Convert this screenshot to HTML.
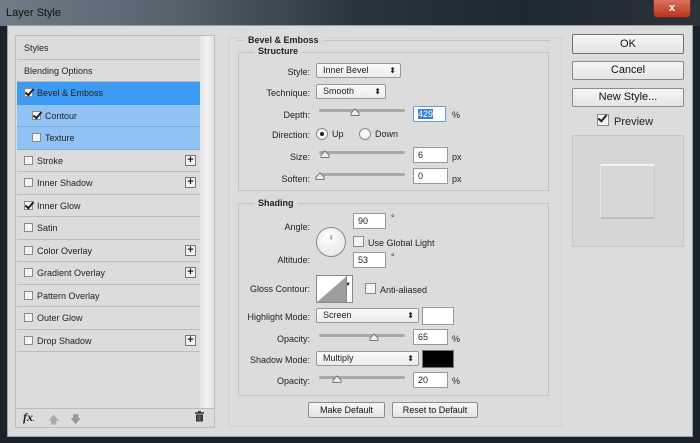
<!DOCTYPE html>
<html><head><meta charset="utf-8">
<style>
*{margin:0;padding:0;box-sizing:border-box}
body{width:700px;height:443px;overflow:hidden;background:#1a222b;font-family:"Liberation Sans",sans-serif;font-size:9px;color:#222;position:relative}
.a{position:absolute}
#title{left:0;top:0;width:700px;height:26px;background:linear-gradient(90deg,#6f7b86 0%,#55616c 25%,#2a3540 50%,#1d2731 75%,#2a333c 100%)}
#body{left:7px;top:25px;width:686px;height:412px;background:#dcdcdc;border:1px solid #9aa0a6}
.row{position:absolute;left:17px;width:183px;height:22.5px;border-bottom:1px solid #bdbdbd;line-height:22px;padding-left:7px}
.cb{display:inline-block;width:9px;height:9px;border:1px solid #8a8a8a;background:#f4f4f4;vertical-align:-1px;margin-right:4px;position:relative}
.cb.on::after{content:"";position:absolute;left:2px;top:-2px;width:3px;height:7px;border:solid #222;border-width:0 2px 2px 0;transform:rotate(40deg)}
.plus{position:absolute;right:4px;top:5px;width:11px;height:11px;border:1px solid #777;background:#f2f2f2;font-size:11px;line-height:9px;text-align:center;font-weight:bold}
.btn{position:absolute;border:1px solid #8c8c8c;border-radius:2px;background:linear-gradient(#f6f6f6,#e4e4e4);text-align:center;font-size:11px;color:#111}
.lbl{position:absolute;text-align:right;width:80px}
.sel{position:absolute;height:15px;border:1px solid #999;background:linear-gradient(#fafafa,#ececec);border-radius:2px;padding-left:6px;line-height:13px}
.sel::after{content:"⬍";position:absolute;right:4px;top:0;font-size:8px}
.inp{position:absolute;height:16px;border:1px solid #999;background:#fff;padding-left:4px;line-height:14px}
.trk{position:absolute;height:3px;background:#a9a9a9;border-radius:2px}
.thm{position:absolute;width:10px;height:8px}
.grp{position:absolute;border:1px solid #c4c4c4}
.gt{position:absolute;background:#dcdcdc;font-weight:bold;padding:0 4px}
.rad{display:inline-block;width:12px;height:12px;border:1px solid #888;border-radius:50%;background:#f6f6f6;vertical-align:-3px;margin-right:4px;position:relative}
</style></head><body>
<div id="title" class="a"></div>
<div class="a" style="left:6px;top:7px;color:#111;font-size:11px">Layer Style</div>
<div class="a" style="left:653px;top:0;width:38px;height:18px;background:linear-gradient(#d9735f,#b8321c);border:1px solid #6a2a20;border-top:none;border-radius:0 0 4px 4px;color:#fff;text-align:center;font-weight:bold;font-size:11px;line-height:17px">x</div>
<div id="body" class="a"></div>

<div class="a" style="left:15px;top:35px;width:200px;height:393px;border:1px solid #bdbdbd;background:#dcdcdc"></div>
<div class="a" style="left:200px;top:36px;width:14px;height:372px;background:linear-gradient(90deg,#e4e4e4,#f4f4f4,#e0e0e0)"></div>
<div class="row" style="top:37px;padding-left:7px">Styles</div>
<div class="row" style="top:59.5px">Blending Options</div>
<div class="row" style="top:82px;background:#3c9bf4;border-color:#3c9bf4"><span class="cb on"></span>Bevel &amp; Emboss</div>
<div class="row" style="top:104.5px;background:#90c3f3;padding-left:15px;border-color:#78aee0"><span class="cb on"></span>Contour</div>
<div class="row" style="top:127px;background:#90c3f3;padding-left:15px;border-color:#78aee0"><span class="cb"></span>Texture</div>
<div class="row" style="top:149.5px"><span class="cb"></span>Stroke<span class="plus">+</span></div>
<div class="row" style="top:172px"><span class="cb"></span>Inner Shadow<span class="plus">+</span></div>
<div class="row" style="top:194.5px"><span class="cb on"></span>Inner Glow</div>
<div class="row" style="top:217px"><span class="cb"></span>Satin</div>
<div class="row" style="top:239.5px"><span class="cb"></span>Color Overlay<span class="plus">+</span></div>
<div class="row" style="top:262px"><span class="cb"></span>Gradient Overlay<span class="plus">+</span></div>
<div class="row" style="top:284.5px"><span class="cb"></span>Pattern Overlay</div>
<div class="row" style="top:307px"><span class="cb"></span>Outer Glow</div>
<div class="row" style="top:329.5px"><span class="cb"></span>Drop Shadow<span class="plus">+</span></div>
<div class="a" style="left:16px;top:408px;width:198px;height:1px;background:#bdbdbd"></div>
<div class="a" style="left:23px;top:410px;font-family:'Liberation Serif',serif;font-style:italic;font-weight:bold;font-size:12px">fx<span style="font-size:6px">.</span></div>
<div class="a" style="left:48px;top:411px;color:#aaa;font-size:11px">🡅</div>
<div class="a" style="left:70px;top:411px;color:#999;font-size:11px">🡇</div>
<svg class="a" style="left:194px;top:411px" width="11" height="11" viewBox="0 0 11 11"><path d="M4 0.5H7M1 2H10" stroke="#333" stroke-width="1.5"/><path d="M2 3.5H9V10.5H2Z" fill="#333"/><path d="M4 4.5V9.5M5.5 4.5V9.5M7 4.5V9.5" stroke="#888" stroke-width="0.6"/></svg>

<div class="grp" style="left:228px;top:37px;width:334px;height:390px;border-color:#d0d0d0"></div>
<div class="grp" style="left:237px;top:40px;width:313px;height:1px;border-width:1px 0 0 0"></div>
<div class="gt" style="left:244px;top:35px">Bevel &amp; Emboss</div>
<div class="grp" style="left:238px;top:52px;width:311px;height:139px"></div>
<div class="gt" style="left:254px;top:46px">Structure</div>
<div class="lbl" style="left:230px;top:67px">Style:</div>
<div class="sel" style="left:316px;top:63px;width:85px">Inner Bevel</div>
<div class="lbl" style="left:230px;top:88px">Technique:</div>
<div class="sel" style="left:316px;top:84px;width:70px">Smooth</div>
<div class="lbl" style="left:230px;top:110px">Depth:</div>
<div class="trk" style="left:319px;top:109px;width:86px"></div>
<svg class="thm" style="left:350px;top:108px" viewBox="0 0 10 8"><path d="M1 7.5H9V5L5 1 1 5Z" fill="#eee" stroke="#777"/></svg>
<div class="inp" style="left:413px;top:106px;width:33px;border-color:#6a9cd6"><span style="background:#3a7fd6;color:#fff">429</span></div>
<div class="a" style="left:452px;top:110px">%</div>
<div class="lbl" style="left:230px;top:130px">Direction:</div>
<div class="a" style="left:316px;top:128px"><span class="rad"><span style="position:absolute;left:3px;top:3px;width:4px;height:4px;border-radius:50%;background:#222"></span></span>Up</div>
<div class="a" style="left:359px;top:128px"><span class="rad"></span>Down</div>
<div class="lbl" style="left:230px;top:152px">Size:</div>
<div class="trk" style="left:319px;top:151px;width:86px"></div>
<svg class="thm" style="left:320px;top:150px" viewBox="0 0 10 8"><path d="M1 7.5H9V5L5 1 1 5Z" fill="#eee" stroke="#777"/></svg>
<div class="inp" style="left:413px;top:147px;width:35px">6</div>
<div class="a" style="left:452px;top:152px">px</div>
<div class="lbl" style="left:230px;top:174px">Soften:</div>
<div class="trk" style="left:319px;top:173px;width:86px"></div>
<svg class="thm" style="left:315px;top:172px" viewBox="0 0 10 8"><path d="M1 7.5H9V5L5 1 1 5Z" fill="#eee" stroke="#777"/></svg>
<div class="inp" style="left:413px;top:168px;width:35px">0</div>
<div class="a" style="left:452px;top:174px">px</div>

<div class="grp" style="left:238px;top:203px;width:311px;height:193px"></div>
<div class="gt" style="left:254px;top:198px">Shading</div>
<div class="lbl" style="left:230px;top:222px">Angle:</div>
<div class="a" style="left:316px;top:227px;width:30px;height:30px;border:1px solid #888;border-radius:50%;background:radial-gradient(circle at 40% 35%,#fff,#e0e0e0);text-align:center;font-size:8px;line-height:20px">♀</div>
<div class="inp" style="left:353px;top:213px;width:33px">90</div>
<div class="a" style="left:391px;top:213px">°</div>
<div class="a" style="left:353px;top:236px"><span class="cb" style="width:11px;height:11px"></span>Use Global Light</div>
<div class="lbl" style="left:230px;top:255px">Altitude:</div>
<div class="inp" style="left:353px;top:252px;width:33px">53</div>
<div class="a" style="left:391px;top:252px">°</div>
<div class="lbl" style="left:230px;top:284px">Gloss Contour:</div>
<div class="a" style="left:316px;top:275px;width:37px;height:28px;border:1px solid #888;background:#fff"><svg width="30" height="26" style="position:absolute;left:0;top:0"><path d="M0 26L30 0V26Z" fill="#9e9e9e"/></svg><span style="position:absolute;right:1px;top:6px;font-size:6px">▼</span><span style="position:absolute;left:29px;top:0;width:1px;height:26px;background:#888"></span></div>
<div class="a" style="left:365px;top:283px"><span class="cb" style="width:11px;height:11px"></span>Anti-aliased</div>
<div class="lbl" style="left:230px;top:312px">Highlight Mode:</div>
<div class="sel" style="left:316px;top:308px;width:103px">Screen</div>
<div class="a" style="left:422px;top:307px;width:32px;height:18px;border:1px solid #999;background:#fff"></div>
<div class="lbl" style="left:230px;top:334px">Opacity:</div>
<div class="trk" style="left:319px;top:334px;width:86px"></div>
<svg class="thm" style="left:369px;top:333px" viewBox="0 0 10 8"><path d="M1 7.5H9V5L5 1 1 5Z" fill="#eee" stroke="#777"/></svg>
<div class="inp" style="left:413px;top:329px;width:35px">65</div>
<div class="a" style="left:452px;top:334px">%</div>
<div class="lbl" style="left:230px;top:355px">Shadow Mode:</div>
<div class="sel" style="left:316px;top:351px;width:103px">Multiply</div>
<div class="a" style="left:422px;top:350px;width:32px;height:18px;border:1px solid #777;background:#000"></div>
<div class="lbl" style="left:230px;top:376px">Opacity:</div>
<div class="trk" style="left:319px;top:376px;width:86px"></div>
<svg class="thm" style="left:332px;top:375px" viewBox="0 0 10 8"><path d="M1 7.5H9V5L5 1 1 5Z" fill="#eee" stroke="#777"/></svg>
<div class="inp" style="left:413px;top:372px;width:35px">20</div>
<div class="a" style="left:452px;top:376px">%</div>
<div class="btn" style="left:308px;top:402px;width:77px;height:16px;font-size:9px;line-height:14px">Make Default</div>
<div class="btn" style="left:392px;top:402px;width:86px;height:16px;font-size:9px;line-height:14px">Reset to Default</div>

<div class="btn" style="left:572px;top:34px;width:112px;height:20px;line-height:18px;border-color:#707070">OK</div>
<div class="btn" style="left:572px;top:61px;width:112px;height:19px;line-height:17px">Cancel</div>
<div class="btn" style="left:572px;top:88px;width:112px;height:19px;line-height:17px">New Style...</div>
<div class="a" style="left:597px;top:114px;font-size:11px"><span class="cb on" style="width:12px;height:12px;margin-right:5px"></span>Preview</div>
<div class="a" style="left:572px;top:135px;width:112px;height:112px;border:1px solid #c6c6c6;background:#d6d6d6"></div>
<div class="a" style="left:600px;top:164px;width:55px;height:55px;background:#d7d7d7;border-top:2px solid #f4f4f4;border-bottom:2px solid #bdbdbd;border-left:1px solid #e6e6e6;border-right:1px solid #c8c8c8;border-radius:2px"></div>
</body></html>
